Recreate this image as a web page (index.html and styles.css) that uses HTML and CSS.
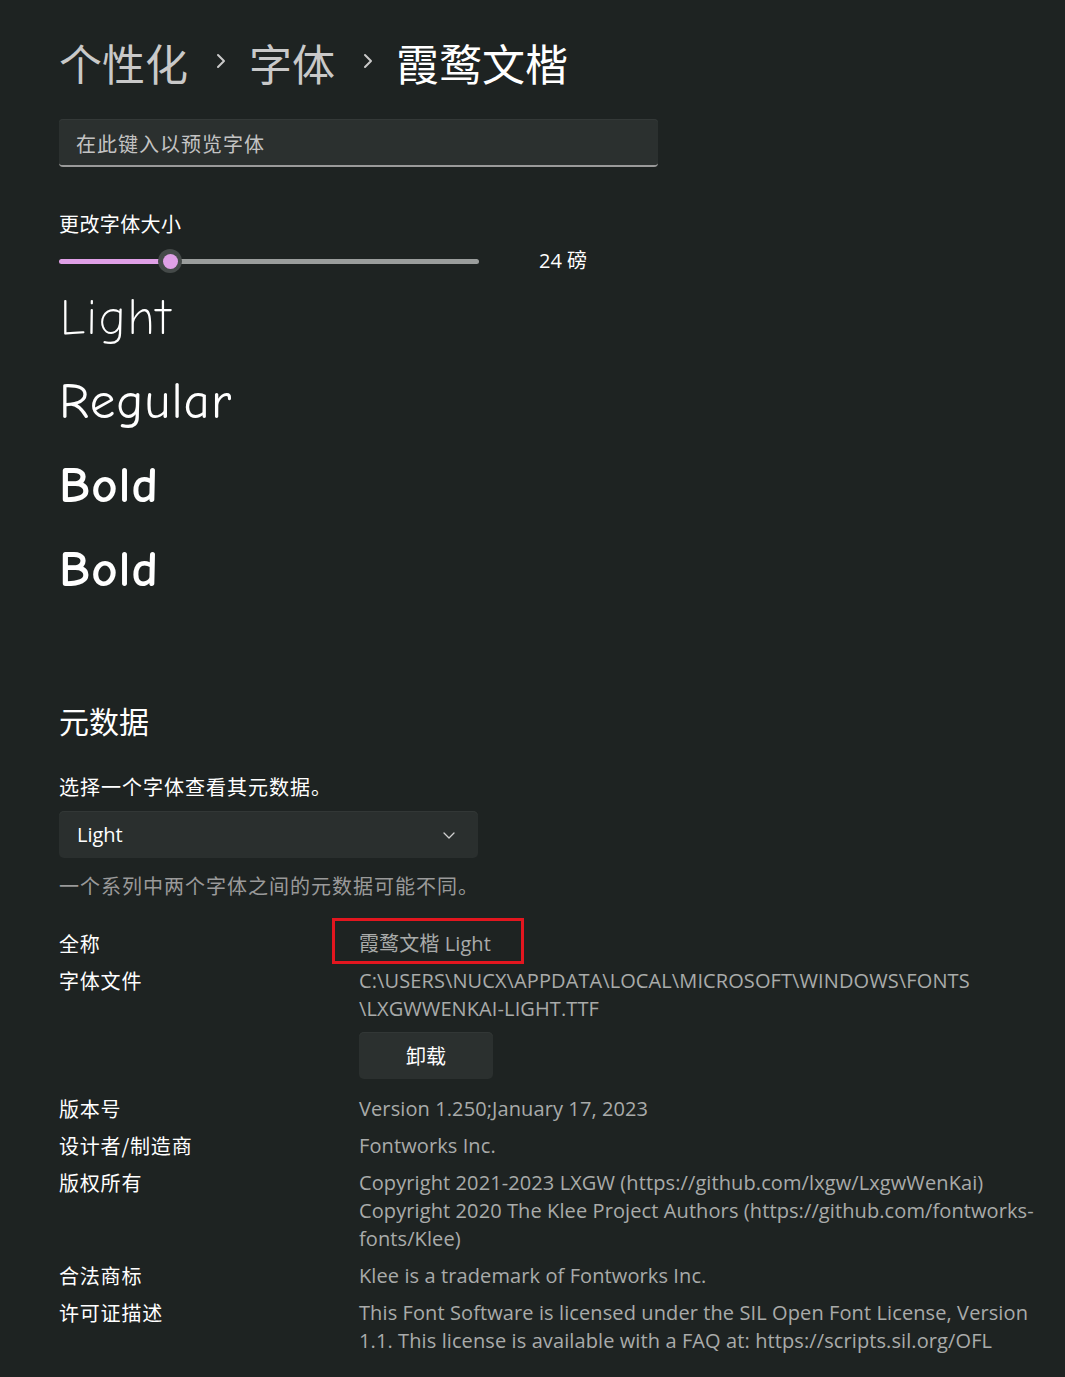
FILE: index.html
```html
<!DOCTYPE html>
<html lang="zh-CN">
<head>
<meta charset="utf-8">
<title>霞鹜文楷</title>
<link rel="stylesheet" href="styles.css">
</head>
<body>
<main class="page">
  <h1 class="crumbs">
    <span class="crumb">个性化</span>
    <svg class="sep" width="10" height="16" viewBox="0 0 10 16"><path d="M2 2 L8 8 L2 14" fill="none" stroke="#c9c9c9" stroke-width="2" stroke-linecap="round" stroke-linejoin="round"/></svg>
    <span class="crumb">字体</span>
    <svg class="sep" width="10" height="16" viewBox="0 0 10 16"><path d="M2 2 L8 8 L2 14" fill="none" stroke="#c9c9c9" stroke-width="2" stroke-linecap="round" stroke-linejoin="round"/></svg>
    <span class="crumb current">霞鹜文楷</span>
  </h1>

  <div class="preview-input">在此键入以预览字体</div>

  <div class="size-label">更改字体大小</div>
  <div class="slider-row">
    <div class="slider">
      <div class="track-fill"></div>
      <div class="thumb"><div class="thumb-dot"></div></div>
      <div class="track-rest"></div>
    </div>
    <div class="size-value">24 磅</div>
  </div>

  <div class="samples">
    <div class="sample light">Light</div>
    <div class="sample regular">Regular</div>
    <div class="sample bold">Bold</div>
    <div class="sample bold">Bold</div>
  </div>

  <h2 class="section-title">元数据</h2>
  <div class="choose">选择一个字体查看其元数据。</div>
  <div class="dropdown">
    <span>Light</span>
    <svg class="chev" width="14" height="10" viewBox="0 0 14 10"><path d="M2 3 L7 8 L12 3" fill="none" stroke="#d0d0d0" stroke-width="1.3" stroke-linecap="round" stroke-linejoin="round"/></svg>
  </div>
  <div class="note">一个系列中两个字体之间的元数据可能不同。</div>

  <div class="meta">
    <div class="label">全称</div>
    <div class="value"><span class="highlight">霞鹜文楷 Light</span></div>

    <div class="label">字体文件</div>
    <div class="value">
      <div>C:\USERS\NUCX\APPDATA\LOCAL\MICROSOFT\WINDOWS\FONTS<br>\LXGWWENKAI-LIGHT.TTF</div>
      <div class="btn">卸载</div>
    </div>

    <div class="label">版本号</div>
    <div class="value">Version 1.250;January 17, 2023</div>

    <div class="label">设计者/制造商</div>
    <div class="value">Fontworks Inc.</div>

    <div class="label">版权所有</div>
    <div class="value">Copyright 2021-2023 LXGW (https://github.com/lxgw/LxgwWenKai)<br>Copyright 2020 The Klee Project Authors (https://github.com/fontworks-<br>fonts/Klee)</div>

    <div class="label">合法商标</div>
    <div class="value">Klee is a trademark of Fontworks Inc.</div>

    <div class="label">许可证描述</div>
    <div class="value">This Font Software is licensed under the SIL Open Font License, Version<br>1.1. This license is available with a FAQ at: https://scripts.sil.org/OFL</div>
  </div>
</main>
</body>
</html>
```

FILE: styles.css
```css
* { box-sizing: border-box; }
html, body {
  margin: 0;
  background: #1e2322;
}
body {
  font-family: "Open Sans", "Noto Sans CJK SC", sans-serif;
  color: #ffffff;
}
.page {
  padding: 33px 0 20px 59px;
  width: 1065px;
  height: 1377px;
  overflow: hidden;
}
.crumbs {
  margin: 0;
  font-family: "Noto Sans CJK SC", sans-serif;
  font-weight: 400;
  font-size: 43px;
  line-height: 58px;
  display: flex;
  align-items: center;
}
.crumb { color: #c9c9c9; }
.crumb.current { color: #ffffff; }
.sep {
  margin: 0 23px 0 28px;
  position: relative;
  top: -1px;
}
.preview-input {
  margin-top: 28px;
  width: 599px;
  height: 48px;
  background: #2b302f;
  border-radius: 4px;
  border-bottom: 2px solid #9a9a9a;
  box-shadow: inset 0 1px 0 #343938;
  color: #c3c3c3;
  font-family: "Noto Sans CJK SC", sans-serif;
  font-size: 20px;
  letter-spacing: 1px;
  line-height: 50px;
  padding-left: 17px;
}
.size-label {
  margin-top: 40px;
  font-family: "Noto Sans CJK SC", sans-serif;
  font-size: 20px;
  letter-spacing: 0.4px;
  line-height: 34px;
}
.slider-row {
  display: flex;
  align-items: center;
  height: 30px;
  margin-top: 5px;
}
.slider {
  width: 420px;
  display: flex;
  align-items: center;
  position: relative;
}
.track-fill {
  width: 101px;
  height: 5px;
  background: #dfa0e6;
  border-radius: 3px 0 0 3px;
}
.thumb {
  width: 24px;
  height: 24px;
  border-radius: 50%;
  background: #454a49;
  display: flex;
  align-items: center;
  justify-content: center;
  margin: 0 -2px;
  position: relative;
  z-index: 1;
}
.thumb-dot {
  width: 15px;
  height: 15px;
  border-radius: 50%;
  background: #dfa0e6;
}
.track-rest {
  flex: 1;
  height: 5px;
  background: #9a9d9c;
  border-radius: 0 3px 3px 0;
}
.size-value {
  margin-left: 60px;
  font-size: 20px;
  font-family: "Open Sans", "Noto Sans CJK SC", sans-serif;
  position: relative;
  top: -2px;
}
.samples {
  margin-top: 0px;
  font-family: "Comic Neue", "Lato", "DejaVu Sans", sans-serif;
}
.sample {
  font-size: 51px;
  line-height: 84px;
  letter-spacing: 1px;
}
.sample.light { font-weight: 300; }
.sample.regular { font-weight: 400; }
.sample.bold { font-weight: 600; }
.section-title {
  margin: 88px 0 0 0;
  font-family: "Noto Sans CJK SC", sans-serif;
  font-weight: 400;
  font-size: 30px;
  line-height: 40px;
}
.choose {
  margin-top: 33px;
  font-family: "Noto Sans CJK SC", sans-serif;
  font-size: 20px;
  letter-spacing: 1px;
  line-height: 28px;
}
.dropdown {
  margin-top: 10px;
  width: 419px;
  height: 47px;
  background: #2a2f2e;
  border-radius: 5px;
  box-shadow: inset 0 1px 0 #323736;
  display: flex;
  align-items: center;
  justify-content: space-between;
  padding: 0 22px 0 18px;
  font-size: 20px;
}
.note {
  margin-top: 14px;
  color: #9a9a9a;
  font-family: "Noto Sans CJK SC", sans-serif;
  font-size: 20px;
  letter-spacing: 1px;
  line-height: 28px;
}
.meta {
  margin-top: 30px;
  display: grid;
  grid-template-columns: 300px 690px;
  row-gap: 9px;
  font-size: 20px;
  line-height: 28px;
}
.label {
  font-family: "Noto Sans CJK SC", sans-serif;
  color: #ffffff;
  letter-spacing: 0.8px;
}
.value {
  color: #a9abaa;
  font-family: "Open Sans", "Noto Sans CJK SC", sans-serif;
  letter-spacing: 0.1px;
}
.highlight {
  display: inline-block;
  position: relative;
}
.highlight::after {
  content: "";
  box-sizing: border-box;
  position: absolute;
  left: -27px;
  top: -12px;
  width: 192px;
  height: 46px;
  border: 3px solid #e3161f;
}
.btn {
  margin-top: 9px;
  margin-bottom: 7px;
  width: 134px;
  height: 47px;
  background: #2b302f;
  border-radius: 5px;
  box-shadow: inset 0 1px 0 #323736;
  color: #ffffff;
  font-family: "Noto Sans CJK SC", sans-serif;
  display: flex;
  align-items: center;
  justify-content: center;
  letter-spacing: 0;
}
```
